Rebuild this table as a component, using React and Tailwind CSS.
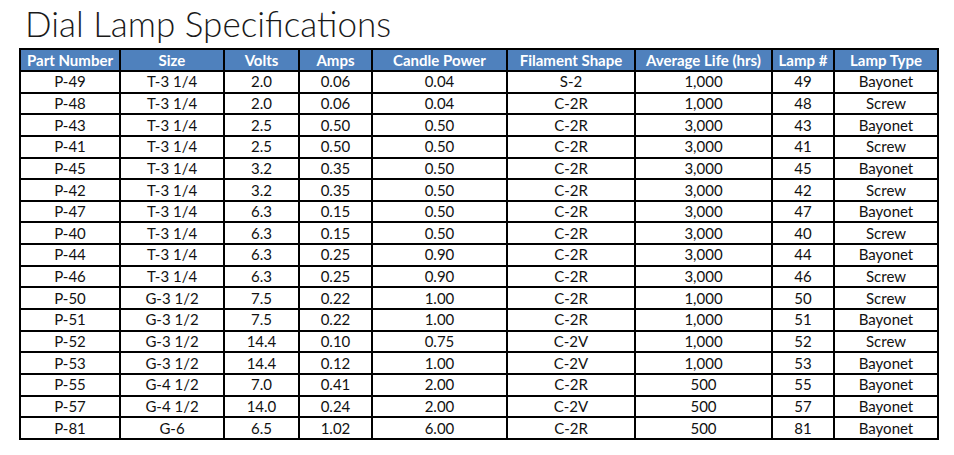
const columns = [
  { label: "Part Number", w: "w-[100px]" },
  { label: "Size", w: "w-[104px]" },
  { label: "Volts", w: "w-[75px]" },
  { label: "Amps", w: "w-[73px]" },
  { label: "Candle Power", w: "w-[135px]" },
  { label: "Filament Shape", w: "w-[128px]" },
  { label: "Average Life (hrs)", w: "w-[137px]" },
  { label: "Lamp #", w: "w-[62px]" },
  { label: "Lamp Type", w: "w-[104px]" },
];

const rows = [
  ["P-49", "T-3 1/4", "2.0", "0.06", "0.04", "S-2", "1,000", "49", "Bayonet"],
  ["P-48", "T-3 1/4", "2.0", "0.06", "0.04", "C-2R", "1,000", "48", "Screw"],
  ["P-43", "T-3 1/4", "2.5", "0.50", "0.50", "C-2R", "3,000", "43", "Bayonet"],
  ["P-41", "T-3 1/4", "2.5", "0.50", "0.50", "C-2R", "3,000", "41", "Screw"],
  ["P-45", "T-3 1/4", "3.2", "0.35", "0.50", "C-2R", "3,000", "45", "Bayonet"],
  ["P-42", "T-3 1/4", "3.2", "0.35", "0.50", "C-2R", "3,000", "42", "Screw"],
  ["P-47", "T-3 1/4", "6.3", "0.15", "0.50", "C-2R", "3,000", "47", "Bayonet"],
  ["P-40", "T-3 1/4", "6.3", "0.15", "0.50", "C-2R", "3,000", "40", "Screw"],
  ["P-44", "T-3 1/4", "6.3", "0.25", "0.90", "C-2R", "3,000", "44", "Bayonet"],
  ["P-46", "T-3 1/4", "6.3", "0.25", "0.90", "C-2R", "3,000", "46", "Screw"],
  ["P-50", "G-3 1/2", "7.5", "0.22", "1.00", "C-2R", "1,000", "50", "Screw"],
  ["P-51", "G-3 1/2", "7.5", "0.22", "1.00", "C-2R", "1,000", "51", "Bayonet"],
  ["P-52", "G-3 1/2", "14.4", "0.10", "0.75", "C-2V", "1,000", "52", "Screw"],
  ["P-53", "G-3 1/2", "14.4", "0.12", "1.00", "C-2V", "1,000", "53", "Bayonet"],
  ["P-55", "G-4 1/2", "7.0", "0.41", "2.00", "C-2R", "500", "55", "Bayonet"],
  ["P-57", "G-4 1/2", "14.0", "0.24", "2.00", "C-2V", "500", "57", "Bayonet"],
  ["P-81", "G-6", "6.5", "1.02", "6.00", "C-2R", "500", "81", "Bayonet"],
];

export default function App() {
  return (
    <div className="w-[954px] h-[455px] bg-white font-['Lato',sans-serif] text-[#111]">
      <h1 className="pl-[25px] pt-[2px] h-[48px] text-[35px] font-light leading-[42px] text-[#1a1a1a]">
        Dial Lamp Specifications
      </h1>
      <table className="ml-[19px] w-[920px] table-fixed border-collapse text-[15px] leading-none">
        <thead>
          <tr className="h-[22px] bg-[#4f81bd] text-white">
            {columns.map((c) => (
              <th key={c.label} className={`${c.w} border-2 border-black font-bold text-center`}>
                {c.label}
              </th>
            ))}
          </tr>
        </thead>
        <tbody>
          {rows.map((r) => (
            <tr key={r[0]} className="h-[21.65px]">
              {r.map((cell, i) => (
                <td key={i} className="border-2 border-black text-center">
                  {cell}
                </td>
              ))}
            </tr>
          ))}
        </tbody>
      </table>
    </div>
  );
}
